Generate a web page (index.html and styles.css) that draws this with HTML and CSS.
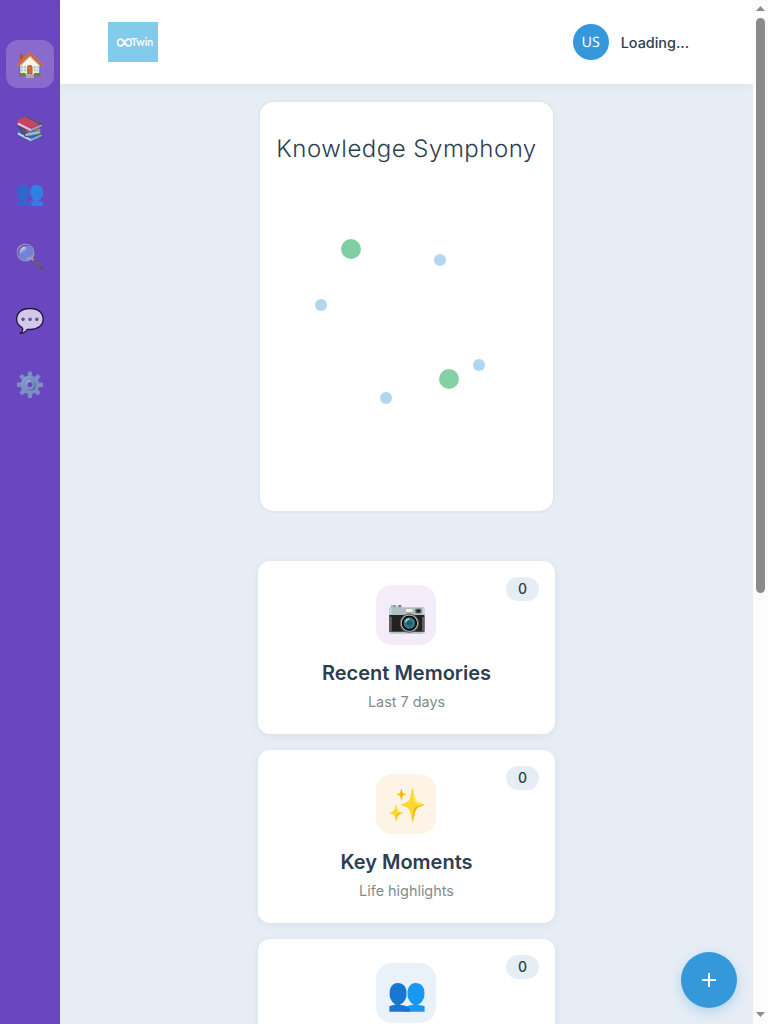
FILE: index.html
```html
<!DOCTYPE html>
<html lang="en">
<head>
<meta charset="utf-8">
<title>Twin</title>
<link rel="stylesheet" href="styles.css">
</head>
<body>
<div class="app">
  <nav class="sidebar">
    <a class="nav-item active"><span>🏠</span></a>
    <a class="nav-item"><span>📚</span></a>
    <a class="nav-item"><span>👥</span></a>
    <a class="nav-item"><span>🔍</span></a>
    <a class="nav-item"><span>💬</span></a>
    <a class="nav-item"><span>⚙️</span></a>
  </nav>
  <div class="page">
    <header class="header">
      <div class="logo">
        <svg class="logo-mark" width="15" height="9" viewBox="0 0 15 9"><path d="M7.5 4.5C6.2 2.2 5.3 1.1 3.8 1.1a3.4 3.4 0 0 0 0 6.8C5.3 7.9 6.2 6.8 7.5 4.5S9.7 1.1 11.2 1.1a3.4 3.4 0 0 1 0 6.8C9.7 7.9 8.8 6.8 7.5 4.5Z" fill="none" stroke="#fff" stroke-width="1.7"/></svg>
        <span class="logo-text">Twin</span>
      </div>
      <div class="user">
        <div class="avatar">US</div>
        <span class="user-name">Loading...</span>
      </div>
    </header>
    <main class="content">
      <section class="symphony">
        <h1 class="symphony-title">Knowledge Symphony</h1>
        <svg class="symphony-canvas" width="293" height="330" viewBox="0 0 293 330">
          <g fill="#80cfa2"><circle cx="91" cy="67" r="10"/><circle cx="189" cy="197" r="10" fill="#84d1a6"/></g>
          <g fill="#b0d6f1"><circle cx="180" cy="78" r="6"/><circle cx="61" cy="123" r="6"/><circle cx="219" cy="183" r="6"/><circle cx="126" cy="216" r="6"/></g>
        </svg>
      </section>
      <section class="cards">
        <article class="card">
          <span class="badge">0</span>
          <div class="card-icon memories">📷</div>
          <h2 class="card-title">Recent Memories</h2>
          <p class="card-text">Last 7 days</p>
        </article>
        <article class="card">
          <span class="badge">0</span>
          <div class="card-icon moments">✨</div>
          <h2 class="card-title">Key Moments</h2>
          <p class="card-text">Life highlights</p>
        </article>
        <article class="card">
          <span class="badge">0</span>
          <div class="card-icon people">👥</div>
        </article>
      </section>
    </main>
  </div>
  <div class="scrollbar">
    <svg width="9" height="5" viewBox="0 0 9 5"><path d="M0 5 4.5 0 9 5Z" fill="#8b8b8b"/></svg>
    <div class="thumb"></div>
    <svg width="9" height="5" viewBox="0 0 9 5"><path d="M0 0h9L4.5 5Z" fill="#8b8b8b"/></svg>
  </div>
  <button class="fab" aria-label="Add"><svg width="14" height="14" viewBox="0 0 14 14"><path d="M7 0v14M0 7h14" stroke="#fff" stroke-width="2"/></svg></button>
</div>
</body>
</html>
```
FILE: styles.css
```css
* { box-sizing: border-box; margin: 0; }
body { overflow: hidden; font-family: Inter, sans-serif; color: #2c3e50; background: #e6edf5; }
.app { display: flex; height: 1024px; overflow: hidden; position: relative; }
.sidebar { width: 60px; flex: none; background: #6b46c1; padding-top: 40px; display: flex; flex-direction: column; align-items: center; gap: 16px; }
.nav-item { width: 48px; height: 48px; border-radius: 12px; display: flex; align-items: center; justify-content: center; }
.nav-item span { opacity: .7; font-size: 24px; line-height: 29px; }
.nav-item.active { background: rgba(255,255,255,.2); }
.nav-item.active span { opacity: 1; }
.page { flex: 1; min-width: 0; display: flex; flex-direction: column; }
.header { height: 84px; flex: none; background: #fff; padding: 0 64px 0 48px; display: flex; align-items: center; justify-content: space-between; box-shadow: 0 2px 8px rgba(0,0,0,.05); }
.logo { width: 50px; height: 40px; background: #83cbeb; color: #fff; display: flex; align-items: center; padding-left: 9px; }
.logo-mark { flex: none; }
.logo-text { font: 600 10.5px/12px Lato, sans-serif; margin: -1px 0 0 -1px; }
.user { display: flex; align-items: center; gap: 12px; }
.avatar { width: 36px; height: 36px; border-radius: 50%; background: #3498db; color: #fff; font: 14.4px/37px "Noto Sans", sans-serif; text-align: center; text-rendering: geometricPrecision; }
.user-name { font-size: 14.4px; font-weight: 500; }
.content { width: 297px; margin: 0 auto; padding-top: 16px; }
.symphony { height: 413px; background: #fff; border: 2px solid #e0e7ee; border-radius: 16px; padding-top: 32px; }
.symphony-title { font-size: 24px; line-height: 29px; font-weight: 300; letter-spacing: .5px; text-align: center; white-space: nowrap; text-rendering: geometricPrecision; }
.symphony-canvas { display: block; margin-top: 19px; }
.cards { display: flex; flex-direction: column; gap: 16px; margin-top: 48px; }
.card { position: relative; height: 173px; flex: none; background: #fff; border-radius: 12px; padding: 24px; display: flex; flex-direction: column; align-items: center; box-shadow: 0 2px 8px rgba(0,0,0,.06); }
.badge { position: absolute; top: 16px; right: 16px; width: 33px; height: 24px; border-radius: 12px; background: #e6edf5; font-size: 14px; line-height: 24px; font-weight: 500; text-align: center; }
.card-icon { width: 60px; height: 60px; flex: none; border-radius: 16px; font-size: 32px; line-height: 61px; display: flex; justify-content: center; margin-right: 1px; padding-left: 1px; }
.memories { background: #f4ecf8; }
.moments { background: #fef4e6; }
.people { background: #e9f1f9; }
.card-title { font-size: 20px; line-height: 24px; font-weight: 600; margin-top: 16px; }
.card-text { font-size: 14.4px; line-height: 18px; margin-top: 8px; color: #7f8c8d; }
.scrollbar { width: 15px; flex: none; background: #fcfcfc; padding: 6px 0 7px; display: flex; flex-direction: column; align-items: center; }
.thumb { width: 9px; height: 575px; margin: 7px 0 auto; border-radius: 5px; background: #8b8b8b; }
.fab { position: absolute; right: 31px; bottom: 16px; width: 56px; height: 56px; padding: 0; border: 0; border-radius: 50%; background: #3498db; display: flex; align-items: center; justify-content: center; box-shadow: 0 4px 12px rgba(52,152,219,.3); }
```
